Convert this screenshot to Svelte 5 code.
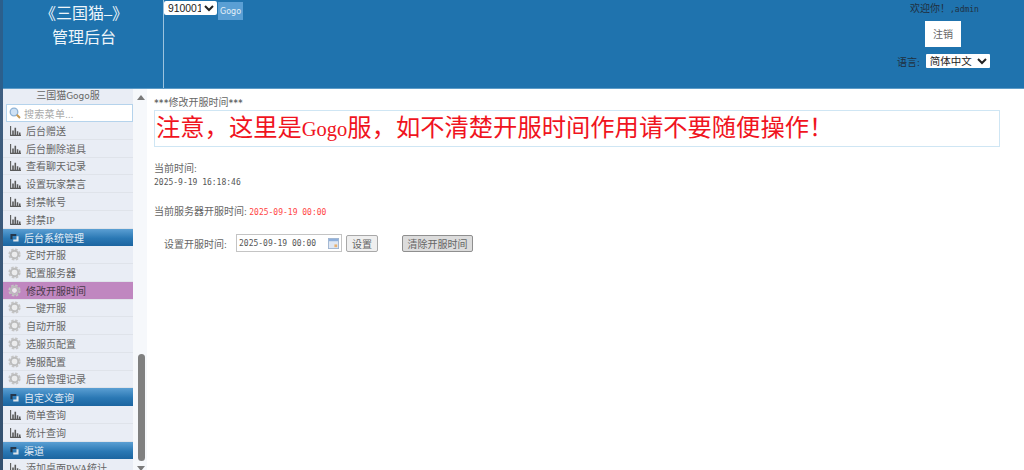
<script>
  const top = ['后台赠送', '后台删除道具', '查看聊天记录', '设置玩家禁言', '封禁帐号', '封禁IP'];
  const sys = ['定时开服', '配置服务器', '修改开服时间', '一键开服', '自动开服', '选服页配置', '跨服配置', '后台管理记录'];
  const query = ['简单查询', '统计查询'];
  const active = '修改开服时间';
</script>

{#snippet bars()}
  <svg class="ico bars" viewBox="0 0 11 11" aria-hidden="true">
    <path d="M0.6 1V10.4H11" fill="none" stroke="#5a5a5a" stroke-width="1.1"/>
    <path d="M2.2 5.5h1.6v4.4H2.2zM4.5 2.8h1.6v7.1H4.5zM6.8 6.2h1.5v3.7H6.8zM9 7.4h1.5v2.5H9z" fill="#5a5a5a"/>
  </svg>
{/snippet}

{#snippet gear()}
  <svg class="ico gear" viewBox="0 0 12 12" aria-hidden="true">
    <circle cx="6" cy="6" r="4.9" fill="none" stroke="#c4c4c4" stroke-width="1.5" stroke-dasharray="2.4 1.45"/>
    <circle cx="6" cy="6" r="3.5" fill="none" stroke="#bcbcbc" stroke-width="1.8"/>
    <circle cx="6" cy="6" r="2.3" fill="#ececec"/>
  </svg>
{/snippet}

{#snippet groupIcon()}
  <svg class="gico" viewBox="0 0 10 10" aria-hidden="true">
    <path d="M0.5 1h6.5v2.2H2.8V7H0.5z" fill="#24364a"/>
    <path d="M9.5 9.5H3.6V7.3h3.6V3.6h2.3z" fill="#dbe3ea"/>
  </svg>
{/snippet}

{#snippet item(label, kind)}
  <div class="row" class:active={label === active} class:gearrow={kind === 'gear'}>
    {#if kind === 'gear'}{@render gear()}{:else}{@render bars()}{/if}
    <span>{label}</span>
  </div>
{/snippet}

{#snippet group(label)}
  <div class="group">{@render groupIcon()}<span>{label}</span></div>
{/snippet}

<div class="page">
  <div class="strip"></div>
  <div class="content">
    <header>
      <div class="brand">
        <div class="b1">《三国猫–》</div>
        <div class="b2">管理后台</div>
      </div>
      <div class="server">
        <select class="srv"><option>910001</option></select>
        <button class="gogo">Gogo</button>
      </div>
      <div class="user">
        <div class="hello">欢迎你！<span class="lat">,admin</span></div>
        <button class="logout">注销</button>
        <div class="lang">
          <span>语言:</span>
          <select class="langsel"><option>简体中文</option></select>
        </div>
      </div>
    </header>
    <div class="body">
      <aside>
        <div class="menu">
          <div class="mtitle">三国猫<span class="sans">Gogo</span>服</div>
          <div class="search">
            <svg class="mag" viewBox="0 0 12 12" aria-hidden="true">
              <circle cx="5" cy="5" r="3.8" fill="#cfe2f5" stroke="#8fb3d6" stroke-width="1.3"/>
              <path d="M7.8 7.8 11 11" stroke="#c79a55" stroke-width="2"/>
            </svg>
            <span>搜索菜单...</span>
          </div>
          {#each top as t}{@render item(t, 'bars')}{/each}
          {@render group('后台系统管理')}
          {#each sys as t}{@render item(t, 'gear')}{/each}
          {@render group('自定义查询')}
          {#each query as t}{@render item(t, 'bars')}{/each}
          {@render group('渠道')}
          {@render item('添加桌面PWA统计', 'bars')}
        </div>
        <div class="scroll">
          <div class="up"></div>
          <div class="thumb"></div>
          <div class="down"></div>
        </div>
      </aside>
      <main>
        <div class="heading"><span class="lat star">***</span>修改开服时间<span class="lat star">***</span></div>
        <div class="notice">注意，这里是<span class="go">Gogo</span>服，如不清楚开服时间作用请不要随便操作！</div>
        <div class="label l1">当前时间:</div>
        <div class="lat time">2025-9-19 16:18:46</div>
        <div class="label l2">当前服务器开服时间: <span class="lat red">2025-09-19 00:00</span></div>
        <div class="form">
          <span class="flabel">设置开服时间:</span>
          <div class="dateinput">
            <span class="lat">2025-09-19 00:00</span>
            <svg class="cal" viewBox="0 0 12 12" aria-hidden="true">
              <rect x="0.5" y="0.5" width="11" height="11" fill="#dfe7f3" stroke="#9fb4d0"/>
              <rect x="1" y="1" width="10" height="2.5" fill="#8fb0dc"/>
              <rect x="7" y="7" width="3" height="3" fill="#e8b070"/>
            </svg>
          </div>
          <button class="btn set">设置</button>
          <button class="btn clear">清除开服时间</button>
        </div>
      </main>
    </div>
  </div>
</div>

<style>
  :global(body) { margin: 0; background: #fff; overflow: hidden; }
  .page {
    display: flex;
    width: 1024px;
    height: 470px;
    overflow: hidden;
    font-family: "Liberation Serif", "Noto Sans CJK SC", serif;
    font-size: 10px;
    color: #666;
  }
  .strip { width: 3px; flex: none; background: linear-gradient(#2b5f8c 0 89px, #3f5e80 89px, #33506f); }
  .content { flex: 1; display: flex; flex-direction: column; min-width: 0; }
  .lat { font-family: "DejaVu Sans Mono", monospace; font-size: 8px; }
  .star { font-weight: bold; }
  .sans { font-family: "DejaVu Sans", sans-serif; font-size: 9px; }

  header {
    height: 89px;
    flex: none;
    display: flex;
    background: #1f73ae;
    border-bottom: 1px solid #5d9cc8;
    box-sizing: border-box;
  }
  .brand { width: 160px; flex: none; text-align: center; color: #eef5fa; box-sizing: border-box; padding-left: 2px; }
  .b1 { font-size: 16px; line-height: 20px; margin-top: 4px; }
  .b2 { font-size: 16px; line-height: 20px; margin-top: 4px; }
  .server { flex: 1; border-left: 1px solid #9cc3de; display: flex; align-items: flex-start; padding-top: 1px; gap: 1px; }
  .srv {
    width: 53px; height: 14px; padding: 0; border: 0; border-radius: 2px; background: #fff;
    font: 10.4px "Liberation Sans", sans-serif; color: #222;
  }
  .gogo {
    width: 25px; height: 18px; margin-top: 1px; padding: 0; border: 0; background: #5a9fd4;
    color: #e4f0f8; font: 8px "DejaVu Sans", sans-serif;
  }
  .user { width: 141px; flex: none; position: relative; color: #1c3a55; box-sizing: border-box; }
  .hello { position: absolute; left: 27px; top: 3px; line-height: 12px; white-space: nowrap; color: #20303f; }
  .logout {
    position: absolute; left: 42px; top: 21px; width: 36px; height: 26px; padding: 0 0 2px;
    background: #fff; border: 0; color: #666; font: 10px "Liberation Serif", "Noto Sans CJK SC", serif;
  }
  .lang { position: absolute; left: 14px; top: 54px; display: flex; align-items: center; gap: 6px; white-space: nowrap; color: #20303f; height: 14px; }
  .langsel {
    width: 64px; height: 14px; padding: 0; border: 0; border-radius: 1px; background: #fff;
    font: 10.5px "Liberation Sans", "Noto Sans CJK SC", sans-serif; color: #222;
  }

  .body { flex: 1; display: flex; min-height: 0; }
  aside { width: 144px; flex: none; display: flex; overflow: hidden; }
  .menu { width: 130px; flex: none; background: #e9edf5; overflow: hidden; }
  .mtitle { height: 15px; line-height: 14px; text-align: center; color: #666; }
  .search {
    height: 18px; box-sizing: border-box; margin: 0 0 0 3px; width: 127px;
    border: 1px solid #b5d3ec; background: #fff; display: flex; align-items: center; gap: 3px;
    padding-left: 2px; color: #aaa; font-size: 10px; letter-spacing: 0.3px;
  }
  .mag { width: 12px; height: 12px; flex: none; }
  .row {
    height: 17.75px; box-sizing: border-box; display: flex; align-items: center; gap: 5px;
    padding-left: 7px; border-bottom: 1px solid #dfe3ea; color: #666; white-space: nowrap;
  }
  .row.gearrow { padding-left: 5px; gap: 5px; }
  .row.active { background: #c087c0; color: #4a3a4a; }
  .ico { flex: none; }
  .bars { width: 11px; height: 11px; }
  .gear { width: 13px; height: 13px; }
  .group {
    height: 17.75px; box-sizing: border-box; display: flex; align-items: center; gap: 5px;
    padding-left: 7px; color: #e2ecf5;
    background: linear-gradient(#5b9fd3, #2a78b4 55%, #1c65a0);
  }
  .gico { width: 9px; height: 9px; flex: none; }
  .scroll { flex: 1; position: relative; background: #f6f8fb; }
  .up, .down { position: absolute; left: 4px; width: 0; height: 0; border-left: 4px solid transparent; border-right: 4px solid transparent; }
  .up { top: 6px; border-bottom: 5px solid #7a7a7a; }
  .down { top: 377px; border-top: 5px solid #7a7a7a; }
  .thumb { position: absolute; left: 5px; top: 265px; width: 7px; height: 107px; border-radius: 4px; background: #808080; }

  main { flex: 1; min-width: 0; padding-left: 7px; padding-right: 24px; }
  .heading { line-height: 12px; margin-top: 8px; }
  .notice {
    margin-top: 0; height: 37px; box-sizing: border-box; border: 1px solid #cfe6f4;
    color: #f0141e; font-size: 24.3px; line-height: 33px; padding-left: 1px; white-space: nowrap; overflow: hidden;
  }
  .go { font-size: 20.5px; }
  .label { line-height: 12px; }
  .l1 { margin-top: 16px; }
  .time { line-height: 12px; margin-top: 2px; color: #555; }
  .l2 { margin-top: 17px; }
  .red { color: #f44; }
  .form { display: flex; align-items: center; margin-top: 15px; padding-left: 10px; height: 18px; }
  .flabel { width: 72px; flex: none; }
  .dateinput {
    width: 106px; height: 18px; box-sizing: border-box; border: 1px solid #c4c4c4; background: #fff;
    display: flex; align-items: center; justify-content: space-between; padding: 0 2px; color: #555;
  }
  .cal { width: 11px; height: 11px; }
  .btn {
    height: 17px; padding: 0; box-sizing: border-box; border: 1px solid #a8a8a8; border-radius: 2px;
    font: 10px "Liberation Serif", "Noto Sans CJK SC", serif; color: #666;
  }
  .set { width: 32px; margin-left: 4px; background: #efefef; }
  .clear { width: 71px; margin-left: 24px; background: #dcdcdc; border-color: #8f8f8f; }
</style>
